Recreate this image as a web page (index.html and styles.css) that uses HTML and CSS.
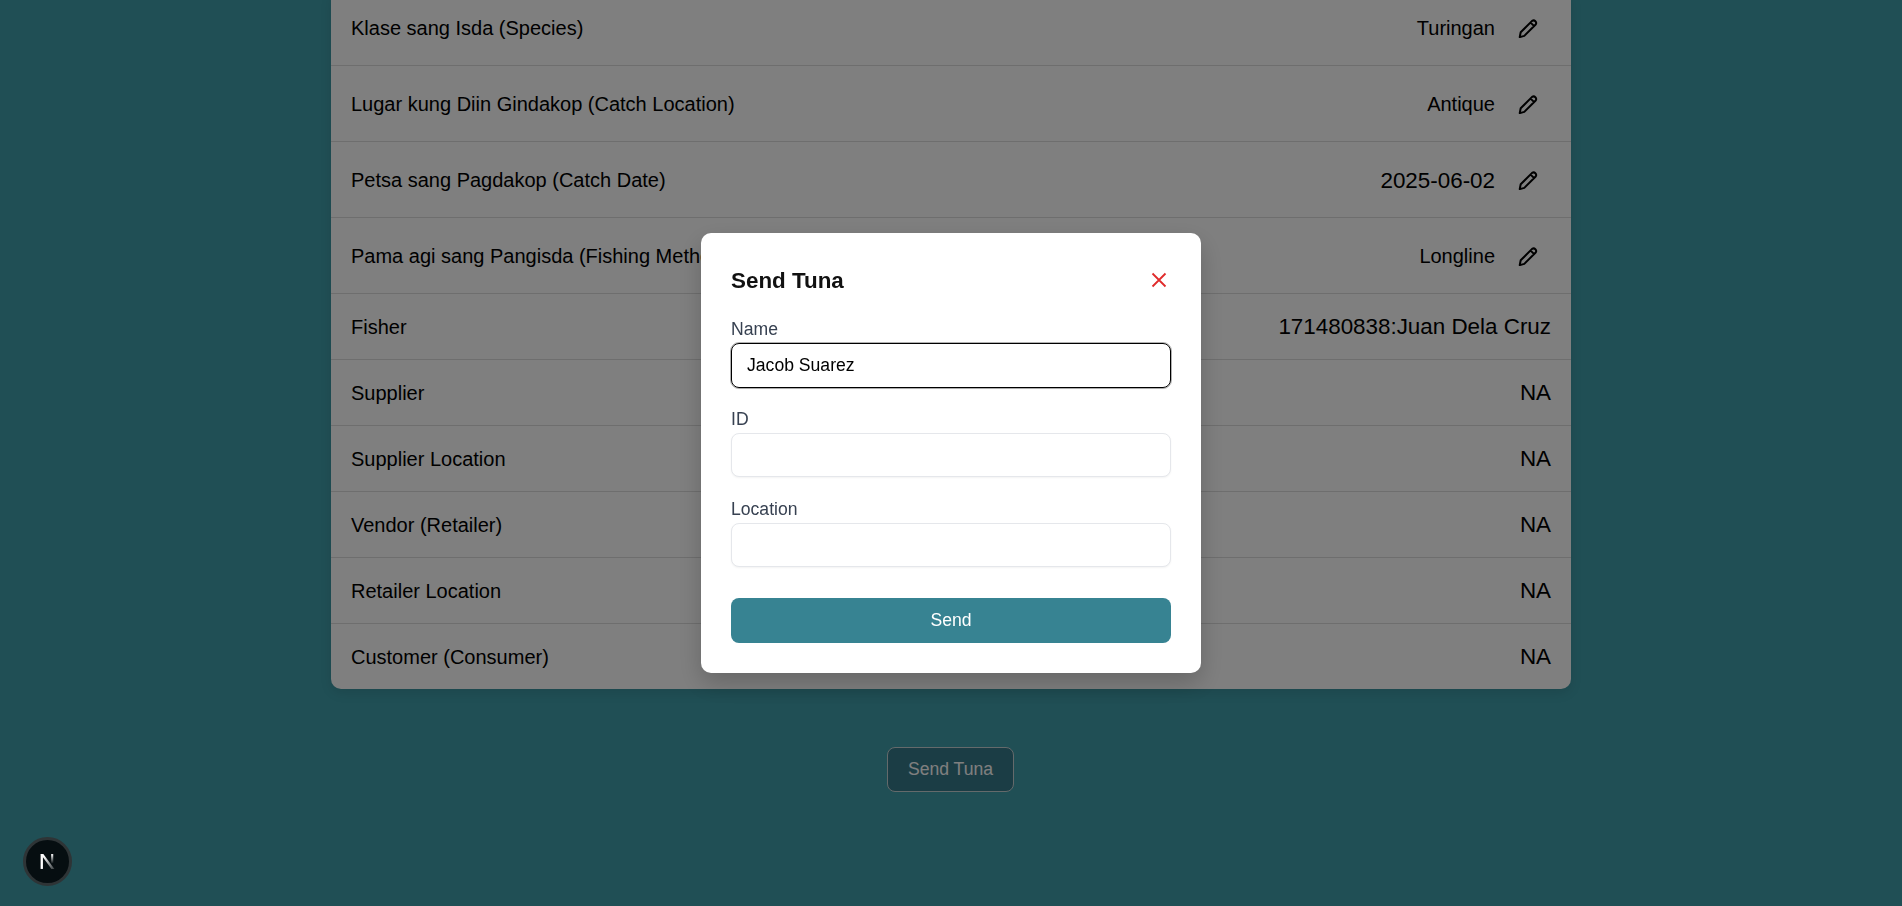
FILE: index.html
```html
<!DOCTYPE html>
<html lang="en">
<head>
    <meta charset="UTF-8">
    <meta name="viewport" content="width=device-width, initial-scale=1.0">
    <title>Send Tuna</title>
    <link rel="stylesheet" href="styles.css">
</head>
<body>
    <main class="page">
        <section class="details">
            <div class="row">
                <span class="row-label">Klase sang Isda (Species)</span>
                <div class="row-value">
                    <span>Turingan</span>
                    <button class="edit-button" aria-label="Edit">
                        <svg viewBox="0 0 20 20"><path d="M14.1 2.9a2.6 2.6 0 0 1 3.6 3.6L6.3 17.9l-4.6 1.2 1-4.8ZM12.6 4.6l3.3 3.3"/></svg>
                    </button>
                </div>
            </div>
            <div class="row">
                <span class="row-label">Lugar kung Diin Gindakop (Catch Location)</span>
                <div class="row-value">
                    <span>Antique</span>
                    <button class="edit-button" aria-label="Edit">
                        <svg viewBox="0 0 20 20"><path d="M14.1 2.9a2.6 2.6 0 0 1 3.6 3.6L6.3 17.9l-4.6 1.2 1-4.8ZM12.6 4.6l3.3 3.3"/></svg>
                    </button>
                </div>
            </div>
            <div class="row">
                <span class="row-label">Petsa sang Pagdakop (Catch Date)</span>
                <div class="row-value">
                    <span class="big-value">2025-06-02</span>
                    <button class="edit-button" aria-label="Edit">
                        <svg viewBox="0 0 20 20"><path d="M14.1 2.9a2.6 2.6 0 0 1 3.6 3.6L6.3 17.9l-4.6 1.2 1-4.8ZM12.6 4.6l3.3 3.3"/></svg>
                    </button>
                </div>
            </div>
            <div class="row">
                <span class="row-label">Pama agi sang Pangisda (Fishing Method)</span>
                <div class="row-value">
                    <span>Longline</span>
                    <button class="edit-button" aria-label="Edit">
                        <svg viewBox="0 0 20 20"><path d="M14.1 2.9a2.6 2.6 0 0 1 3.6 3.6L6.3 17.9l-4.6 1.2 1-4.8ZM12.6 4.6l3.3 3.3"/></svg>
                    </button>
                </div>
            </div>
            <div class="row">
                <span class="row-label">Fisher</span>
                <span class="big-value">171480838:Juan Dela Cruz</span>
            </div>
            <div class="row">
                <span class="row-label">Supplier</span>
                <span class="big-value">NA</span>
            </div>
            <div class="row">
                <span class="row-label">Supplier Location</span>
                <span class="big-value">NA</span>
            </div>
            <div class="row">
                <span class="row-label">Vendor (Retailer)</span>
                <span class="big-value">NA</span>
            </div>
            <div class="row">
                <span class="row-label">Retailer Location</span>
                <span class="big-value">NA</span>
            </div>
            <div class="row">
                <span class="row-label">Customer (Consumer)</span>
                <span class="big-value">NA</span>
            </div>
        </section>
        <button class="send-tuna">Send Tuna</button>
    </main>

    <div class="overlay">
        <form class="modal">
            <div class="modal-header">
                <h2>Send Tuna</h2>
                <button type="button" class="close-button" aria-label="Close">
                    <svg viewBox="0 0 16 16"><path d="M1.5 1.5l13 13M14.5 1.5l-13 13"/></svg>
                </button>
            </div>
            <label class="field">
                <span>Name</span>
                <input type="text" class="focused" value="Jacob Suarez">
            </label>
            <label class="field">
                <span>ID</span>
                <input type="text">
            </label>
            <label class="field">
                <span>Location</span>
                <input type="text">
            </label>
            <button type="button" class="submit-button">Send</button>
        </form>
    </div>

    <div class="next-badge">
        <svg viewBox="0 0 16 16">
            <defs>
                <linearGradient id="fadeDiagonal" x1="0" y1="0" x2="1" y2="1">
                    <stop offset="0.2" stop-color="#fff"/>
                    <stop offset="1" stop-color="#fff" stop-opacity="0.2"/>
                </linearGradient>
                <linearGradient id="fadeRight" x1="0" y1="0" x2="0" y2="1">
                    <stop offset="0" stop-color="#fff"/>
                    <stop offset="1" stop-color="#fff" stop-opacity="0"/>
                </linearGradient>
            </defs>
            <path fill="#fff" d="M1.5 1h2.2v14H1.5z"/>
            <path fill="url(#fadeDiagonal)" d="M1.5 1h2.6l10.4 14h-2.8z"/>
            <path fill="url(#fadeRight)" d="M11.4 1h2v9h-2z"/>
        </svg>
    </div>
</body>
</html>
```

FILE: styles.css
```css
* {
    box-sizing: border-box;
}

body {
    margin: 0;
    height: 100vh;
    overflow: hidden;
    background-color: #409eaa;
    color: #000;
    font-family: "Liberation Sans", Arial, sans-serif;
}

/* page sits scrolled to the bottom, so the list runs off the top */
.page {
    height: 100%;
    display: flex;
    flex-direction: column;
    justify-content: flex-end;
    align-items: center;
    padding-bottom: 114px;
}

.details {
    flex-shrink: 0;
    width: 1240px;
    background: white;
    border-radius: 10px;
    box-shadow: 0 4px 12px rgba(0, 0, 0, 0.1);
    font-size: 20px;
}

.row {
    display: flex;
    justify-content: space-between;
    align-items: center;
    padding: 20px;
    border-bottom: 1px solid #ddd;
}

.row:last-child {
    border-bottom: none;
}

.row-label,
.row-value span {
    padding-top: 2px;
}

.row-value {
    display: flex;
    align-items: center;
    gap: 15px;
}

.big-value {
    font-size: 22.4px;
    line-height: 25px;
}

.edit-button {
    display: flex;
    align-items: center;
    height: 35px;
    margin-right: 5px;
    padding: 0 8px;
    background: none;
    border: none;
}

.edit-button svg {
    width: 20px;
    height: 20px;
    fill: none;
    stroke: #000;
    stroke-width: 2;
    stroke-linejoin: round;
}

.send-tuna {
    flex-shrink: 0;
    width: 127px;
    height: 45px;
    margin-top: 58px;
    margin-right: 1px;
    background-color: #377a8a;
    color: white;
    border: 1px solid #c8d4d6;
    border-radius: 8px;
    font-family: inherit;
    font-size: 17.6px;
}

.overlay {
    position: fixed;
    inset: 0;
    display: flex;
    justify-content: center;
    align-items: center;
    background: rgba(0, 0, 0, 0.5);
}

.modal {
    width: 500px;
    height: 440px;
    padding: 30px;
    background: white;
    border-radius: 10px;
    box-shadow: 0 10px 25px rgba(0, 0, 0, 0.2);
}

.modal-header {
    display: flex;
    justify-content: space-between;
    align-items: center;
    margin-bottom: 24px;
}

.modal-header h2 {
    margin: 0;
    padding-top: 2px;
    font-size: 22.4px;
    line-height: 32px;
    color: #111;
}

.close-button {
    display: flex;
    margin-right: 4px;
    padding: 0;
    background: none;
    border: none;
}

.close-button svg {
    width: 16px;
    height: 16px;
    fill: none;
    stroke: #e02b2b;
    stroke-width: 1.8;
}

.field {
    display: block;
    margin-bottom: 24px;
    font-size: 17.6px;
    color: #374151;
}

.field span {
    display: block;
    margin-bottom: 5px;
    line-height: 17px;
}

.field input {
    display: block;
    width: 100%;
    height: 44px;
    padding: 0 15px;
    background: white;
    border: 1px solid #e5e7eb;
    border-radius: 8px;
    box-shadow: 0 1px 2px rgba(0, 0, 0, 0.05);
    font-family: inherit;
    font-size: 17.6px;
    color: #000;
}

/* reference has the name field focused, its ring is a bit taller */
.field input.focused {
    height: 45px;
    margin-bottom: -1px;
    border-color: #000;
    outline: 1px solid rgba(0, 0, 0, 0.3);
}

.submit-button {
    display: block;
    width: 100%;
    height: 45px;
    margin-top: 31px;
    background-color: #378392;
    color: white;
    border: none;
    border-radius: 8px;
    font-family: inherit;
    font-size: 17.6px;
}

.next-badge {
    position: fixed;
    left: 23px;
    bottom: 20px;
    width: 49px;
    height: 49px;
    display: flex;
    justify-content: center;
    align-items: center;
    background: #060e11;
    border: 3px solid #2e3436;
    border-radius: 50%;
}

.next-badge svg {
    width: 17px;
    height: 17px;
}
```
